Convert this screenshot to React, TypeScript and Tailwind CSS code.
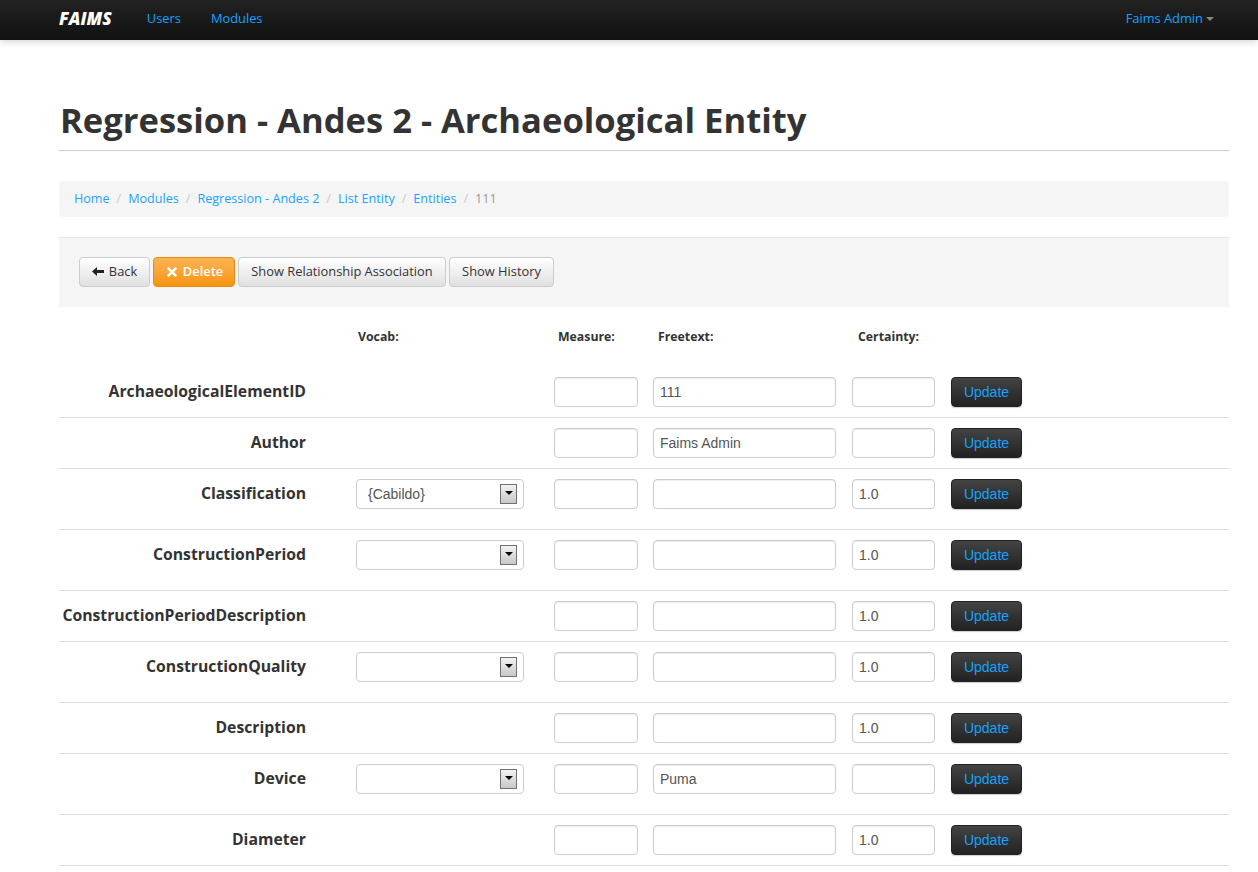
import { FaTimes } from 'react-icons/fa';

const display = { fontFamily: '"Open Sans", "Noto Sans", sans-serif' };

interface Field {
  label: string;
  vocab?: string;
  freetext?: string;
  certainty?: string;
}

const fields: Field[] = [
  { label: 'ArchaeologicalElementID', freetext: '111' },
  { label: 'Author', freetext: 'Faims Admin' },
  { label: 'Classification', vocab: '{Cabildo}', certainty: '1.0' },
  { label: 'ConstructionPeriod', vocab: '', certainty: '1.0' },
  { label: 'ConstructionPeriodDescription', certainty: '1.0' },
  { label: 'ConstructionQuality', vocab: '', certainty: '1.0' },
  { label: 'Description', certainty: '1.0' },
  { label: 'Device', vocab: '', freetext: 'Puma' },
  { label: 'Diameter', certainty: '1.0' },
];

const crumbs = ['Home', 'Modules', 'Regression - Andes 2', 'List Entity', 'Entities'];

function TextBox({ value, width }: { value?: string; width: string }) {
  return (
    <input
      readOnly
      value={value ?? ''}
      className={`${width} h-[30px] shrink-0 rounded-[4px] border border-[#ccc] bg-white px-[6px] font-['Liberation_Sans',sans-serif] text-[14px] text-[#555] shadow-[inset_0_1px_1px_rgba(0,0,0,0.075)] outline-none`}
    />
  );
}

function VocabSelect({ value }: { value: string }) {
  return (
    <div className="flex h-[30px] w-[168px] items-center justify-between rounded-[4px] border border-[#ccc] bg-white pl-[11px] pr-[6px] font-['Liberation_Sans',sans-serif] text-[14px] text-[#555]">
      <span>{value}</span>
      <span className="flex h-[20px] w-[17px] items-center justify-center border border-[#707070] bg-gradient-to-b from-[#f2f2f2] to-[#c8c8c8]">
        <span className="mb-[2px] border-x-[4px] border-t-[4px] border-x-transparent border-t-black" />
      </span>
    </div>
  );
}

function FieldRow({ field }: { field: Field }) {
  const hasVocab = field.vocab !== undefined;
  return (
    <div className={`flex items-start border-b border-[#ddd] pt-[10px] ${hasVocab ? 'pb-[20px]' : 'pb-[10px]'}`}>
      <label className="w-[247px] shrink-0 text-right text-[15.75px] font-bold leading-[28px] text-[#333]">
        {field.label}
      </label>
      <div className="ml-[50px] w-[168px] shrink-0">
        {hasVocab && <VocabSelect value={field.vocab ?? ''} />}
      </div>
      <div className="ml-[30px]">
        <TextBox width="w-[84px]" />
      </div>
      <div className="ml-[15px]">
        <TextBox width="w-[183px]" value={field.freetext} />
      </div>
      <div className="ml-[16px]">
        <TextBox width="w-[83px]" value={field.certainty} />
      </div>
      <button className="ml-[16px] h-[30px] w-[71px] rounded-[4px] border border-[#222] bg-gradient-to-b from-[#444] to-[#222] font-['Liberation_Sans',sans-serif] text-[14px] text-[#0fa3ff] shadow-[0_1px_1px_rgba(0,0,0,0.2)]">
        Update
      </button>
    </div>
  );
}

export default function App() {
  return (
    <div className="min-h-[872px] bg-white text-[12.85px] text-[#333]" style={display}>
      <nav className="flex h-[40px] items-center justify-between bg-gradient-to-b from-[#222] to-[#111] pb-[2px] pl-[59px] pr-[44px] shadow-[0_1px_8px_rgba(0,0,0,0.2)]">
        <div className="flex items-center">
          <span className="text-[17.3px] font-extrabold italic text-white">FAIMS</span>
          <a className="ml-[35px] text-[#0fa3ff]">Users</a>
          <a className="ml-[30px] text-[#0fa3ff]">Modules</a>
        </div>
        <a className="flex items-center text-[#0fa3ff]">
          Faims Admin
          <span className="ml-[3px] border-x-[4px] border-t-[4px] border-x-transparent border-t-[#888]" />
        </a>
      </nav>

      <main className="mx-[59px] w-[1170px]">
        <h1 className="mt-[55px] border-b border-[#ccc] pb-[5px] pl-[1px] text-[34.6px] font-bold leading-[50px] text-[#333]">
          Regression - Andes 2 - Archaeological Entity
        </h1>

        <ol className="mt-[30px] flex h-[36px] items-center rounded-[4px] bg-[#f5f5f5] px-[15px] text-[12.6px]">
          {crumbs.map((crumb) => (
            <li key={crumb} className="flex items-center">
              <a className="text-[#1aa3ff]">{crumb}</a>
              <span className="px-[7px] text-[#ccc]">/</span>
            </li>
          ))}
          <li className="text-[#999]">111</li>
        </ol>

        <div className="mt-[20px] flex h-[70px] items-center gap-[3px] border-t border-[#e5e5e5] bg-[#f5f5f5] px-[20px] pb-[2px]">
          <button className="flex h-[30px] w-[71px] items-center justify-center gap-[5px] rounded-[4px] border border-[#ccc] bg-gradient-to-b from-white to-[#e0e0e0] text-[#333]">
            <svg width="12" height="11" viewBox="0 0 12 11" fill="#222">
              <path d="M0 5.5 5 1v3h7v3H5v3z" />
            </svg>
            Back
          </button>
          <button className="flex h-[30px] w-[82px] items-center justify-center gap-[4px] rounded-[4px] border border-[#e38d13] bg-gradient-to-b from-[#fbb450] to-[#f89406] font-semibold text-white">
            <FaTimes className="text-[14px]" /> Delete
          </button>
          <button className="h-[30px] w-[208px] rounded-[4px] border border-[#ccc] bg-gradient-to-b from-white to-[#e0e0e0] text-[#333]">
            Show Relationship Association
          </button>
          <button className="h-[30px] w-[105px] rounded-[4px] border border-[#ccc] bg-gradient-to-b from-white to-[#e0e0e0] text-[#333]">
            Show History
          </button>
        </div>

        <div className="flex h-[60px] pt-[21px] text-[12.3px] font-bold leading-[18px]">
          <span className="ml-[299px] w-[200px]">Vocab:</span>
          <span className="w-[100px]">Measure:</span>
          <span className="w-[200px]">Freetext:</span>
          <span>Certainty:</span>
        </div>

        {fields.map((field) => (
          <FieldRow key={field.label} field={field} />
        ))}
      </main>
    </div>
  );
}
